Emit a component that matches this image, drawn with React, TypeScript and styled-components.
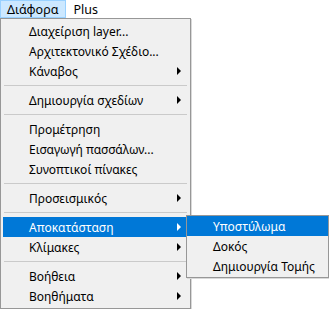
import styled, { createGlobalStyle } from "styled-components";

const GlobalStyle = createGlobalStyle`
  body {
    margin: 0;
    background: #ffffff;
    font-family: "Noto Sans", "DejaVu Sans", sans-serif;
    font-size: 12px;
    color: #000000;
  }
`;

const MenuBar = styled.div`
  display: flex;
  height: 18px;
  background: #ffffff;
`;

const BarItem = styled.div<{ $open?: boolean }>`
  display: flex;
  align-items: center;
  padding: 0 7px 0 6px;
  font-size: 12.5px;
  border: 1px solid ${(p) => (p.$open ? "#99d1ff" : "transparent")};
  background: ${(p) => (p.$open ? "#cce8ff" : "transparent")};
`;

const Dropdown = styled.div`
  width: 185px;
  border: 1px solid #979797;
  background: #f0f0f0;
  padding: 2px;
  box-shadow: 1px 1px 0 #d9d9d9;
`;

const Item = styled.div<{ $active?: boolean }>`
  position: relative;
  display: flex;
  align-items: center;
  justify-content: space-between;
  height: 20px;
  padding-left: 26px;
  background: ${(p) => (p.$active ? "#0078d7" : "transparent")};
  color: ${(p) => (p.$active ? "#ffffff" : "#000000")};
  white-space: nowrap;
`;

const Arrow = styled.span<{ $active?: boolean }>`
  width: 0;
  height: 0;
  margin-right: 7px;
  border-top: 4px solid transparent;
  border-bottom: 4px solid transparent;
  border-left: 4px solid ${(p) => (p.$active ? "#ffffff" : "#000000")};
`;

const Separator = styled.div`
  height: 9px;
  display: flex;
  align-items: center;
  &::after {
    content: "";
    flex: 1;
    height: 1px;
    margin: 0 1px;
    background: #cacaca;
  }
`;

const SubMenu = styled.div`
  position: absolute;
  top: -2px;
  left: calc(100% - 2px);
  width: 141px;
  border: 1px solid #979797;
  background: #f0f0f0;
  padding-bottom: 1px;
  color: #000000;
  box-shadow: 1px 1px 0 #d9d9d9;
`;

type Entry = { label: string; sub?: boolean } | "sep";

const entries: Entry[] = [
  { label: "Διαχείριση layer..." },
  { label: "Αρχιτεκτονικό Σχέδιο..." },
  { label: "Κάναβος", sub: true },
  "sep",
  { label: "Δημιουργία σχεδίων", sub: true },
  "sep",
  { label: "Προμέτρηση" },
  { label: "Εισαγωγή πασσάλων..." },
  { label: "Συνοπτικοί πίνακες" },
  "sep",
  { label: "Προσεισμικός", sub: true },
  "sep",
  { label: "Αποκατάσταση", sub: true },
  { label: "Κλίμακες", sub: true },
  "sep",
  { label: "Βοήθεια", sub: true },
  { label: "Βοηθήματα", sub: true },
];

const subItems = ["Υποστύλωμα", "Δοκός", "Δημιουργία Τομής"];

const App = () => {
  return (
    <>
      <GlobalStyle />
      <MenuBar>
        <BarItem $open>Διάφορα</BarItem>
        <BarItem>Plus</BarItem>
      </MenuBar>
      <Dropdown>
        {entries.map((entry, index) => {
          if (entry === "sep") return <Separator key={index} />;
          const active = entry.label === "Αποκατάσταση";
          return (
            <Item key={index} $active={active}>
              {entry.label}
              {entry.sub && <Arrow $active={active} />}
              {active && (
                <SubMenu>
                  {subItems.map((label, i) => (
                    <Item key={label} $active={i === 0}>
                      {label}
                    </Item>
                  ))}
                </SubMenu>
              )}
            </Item>
          );
        })}
      </Dropdown>
    </>
  );
};

export default App;
